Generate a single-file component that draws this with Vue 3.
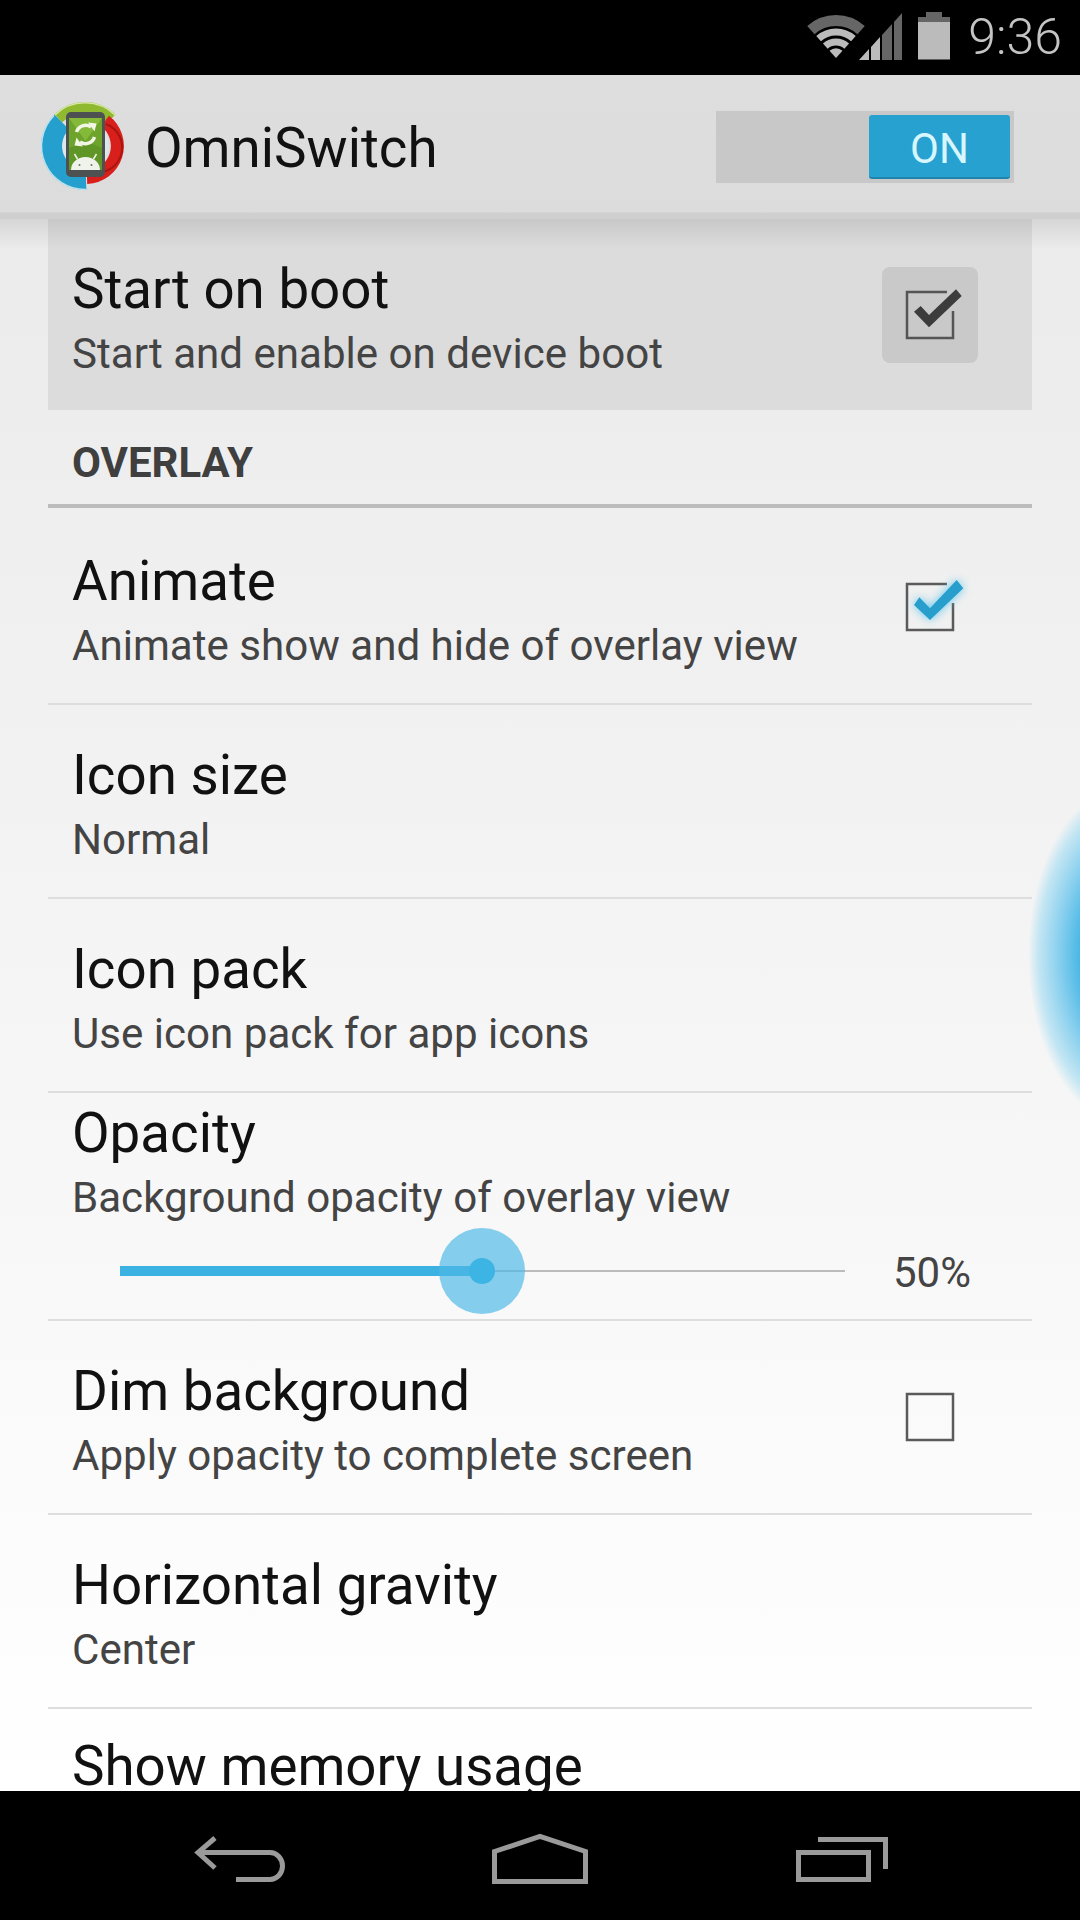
<script setup>
const plainRows = {
  iconSize: { title: 'Icon size', summary: 'Normal' },
  iconPack: { title: 'Icon pack', summary: 'Use icon pack for app icons' },
}
</script>

<template>
  <div class="screen">
    <header class="status-bar">
      <svg class="status-icons" width="160" height="75" viewBox="800 0 160 75">
        <!-- wifi fan -->
        <g fill="none">
          <path d="M811.9 30.1A37.5 37.5 0 0 1 862.1 30.1" stroke="#666" stroke-width="11" />
          <path d="M819.6 38.7A26 26 0 0 1 854.4 38.7" stroke="#bbb" stroke-width="7" />
          <path d="M826.3 46.1A16 16 0 0 1 847.7 46.1" stroke="#bbb" stroke-width="7" />
        </g>
        <path d="M837 58L830.5 50.8A9.5 9.5 0 0 1 843.5 50.8Z" fill="#bbb" />
        <!-- signal bars -->
        <path d="M860 60L870 49V60Z" fill="#bbb" />
        <path d="M872 47L881 37V60H872Z" fill="#bbb" />
        <path d="M883 35L893 24V60H883Z" fill="#666" />
        <path d="M895 22L903 13V60H895Z" fill="#666" />
        <!-- battery -->
        <path d="M927 12H943V17H951V22H919V17H927Z" fill="#666" />
        <rect x="919" y="22" width="32" height="37.500" fill="#bbb" />
      </svg>
      <span class="clock">9:36</span>
    </header>

    <div class="action-bar">
      <svg class="app-icon" width="90" height="90" viewBox="41 101 90 90">
        <circle cx="87" cy="146" r="24" fill="#dde6ea" />
        <!-- swirl: green crown, red right side, blue left side -->
        <path d="M60.200 118.300A38.500 38.500 0 0 1 113.800 118.300" fill="none" stroke="#8fb92f" stroke-width="11" />
        <path d="M56.400 115.400A43.500 43.500 0 0 1 117.600 115.400" fill="none" stroke="#d5e6a0" stroke-width="1.500" />
        <path d="M107 121A31.500 31.500 0 0 1 89 177.500" fill="none" stroke="#d81f1b" stroke-width="13" />
        <path d="M108 124A25 25 0 0 1 90 171" fill="none" stroke="#a8150f" stroke-width="2" />
        <path d="M63.700 122A33.500 33.500 0 0 0 88 179.500" fill="none" stroke="#259fcd" stroke-width="21" />
        <path d="M56 115.500A43.500 43.500 0 0 0 88 189.500" fill="none" stroke="#bfe3ee" stroke-width="1.500" />
        <!-- handset -->
        <rect x="68" y="112" width="39" height="65" rx="5" fill="#4d5152" />
        <rect x="71" y="118" width="33" height="52" fill="#6ea32c" />
        <path d="M71 118H104L87.500 141Z" fill="#85b93a" />
        <path d="M71 170V148L87.500 141L104 148V170Z" fill="#5f9626" />
        <g fill="none" stroke="#f1f6e6" stroke-width="3.500">
          <path d="M78.500 132A9.500 9.500 0 0 1 93 127" />
          <path d="M96.500 137A9.500 9.500 0 0 1 82 142" />
        </g>
        <path d="M90 122.500L98.500 123.500L96.500 131.500Z M85 146.500L76.500 145.500L78.500 137.500Z" fill="#f1f6e6" />
        <path d="M73 170A14.500 13 0 0 1 102 170Z" fill="#f0f2ec" />
        <path d="M79.500 159L76.500 154M95.500 159L98.500 154" stroke="#f0f2ec" stroke-width="1.500" />
        <circle cx="81.500" cy="165" r="1" fill="#6c7a5a" />
        <circle cx="93.500" cy="165" r="1" fill="#6c7a5a" />
      </svg>
      <span class="app-title">OmniSwitch</span>
      <div class="toggle">
        <span class="toggle-thumb">ON</span>
      </div>
    </div>

    <main class="prefs">
      <section class="row row-pressed">
        <div class="row-text">
          <div class="title">Start on boot</div>
          <div class="summary">Start and enable on device boot</div>
        </div>
        <div class="check-wrap check-wrap-pressed">
          <svg class="check" width="60" height="60" viewBox="0 0 60 60">
            <path d="M47 7H7V53H53V26" fill="none" stroke="#555" stroke-width="2.500" />
            <path d="M29 42.300L61.700 11L56 4.300L29 30L20.700 21L14 26.700Z" fill="#3c3c3c" />
          </svg>
        </div>
      </section>

      <h2 class="group">OVERLAY</h2>

      <section class="row">
        <div class="row-text">
          <div class="title">Animate</div>
          <div class="summary">Animate show and hide of overlay view</div>
        </div>
        <div class="check-wrap">
          <svg class="check check-on" width="60" height="60" viewBox="0 0 60 60">
            <path d="M47 7H7V53H53V26" fill="none" stroke="#5a5a5a" stroke-width="2.500" />
            <path class="check-mark" d="M30 43L63.300 11.300L56.700 3L30 31.300L19.300 20.300L14 28Z" fill="#279ecb" />
          </svg>
        </div>
      </section>

      <section class="row">
        <div class="row-text">
          <div class="title">{{ plainRows.iconSize.title }}</div>
          <div class="summary">{{ plainRows.iconSize.summary }}</div>
        </div>
      </section>

      <section class="row">
        <div class="row-text">
          <div class="title">{{ plainRows.iconPack.title }}</div>
          <div class="summary">{{ plainRows.iconPack.summary }}</div>
        </div>
      </section>

      <section class="row row-slider">
        <div class="row-text row-text-tight">
          <div class="title">Opacity</div>
          <div class="summary">Background opacity of overlay view</div>
        </div>
        <div class="slider">
          <div class="slider-track">
            <div class="slider-fill"></div>
            <div class="slider-thumb"><span class="slider-dot"></span></div>
          </div>
          <span class="slider-value">50%</span>
        </div>
      </section>

      <section class="row">
        <div class="row-text">
          <div class="title">Dim background</div>
          <div class="summary">Apply opacity to complete screen</div>
        </div>
        <div class="check-wrap">
          <svg width="60" height="60" viewBox="0 0 60 60">
            <rect x="7" y="7" width="46" height="46" fill="none" stroke="#5a5a5a" stroke-width="2.500" />
          </svg>
        </div>
      </section>

      <section class="row">
        <div class="row-text">
          <div class="title">Horizontal gravity</div>
          <div class="summary">Center</div>
        </div>
      </section>

      <section class="row row-last">
        <div class="row-text row-text-last">
          <div class="title">Show memory usage</div>
        </div>
      </section>

      <!-- edge handle of the switcher, peeking in from the right -->
      <div class="edge-glow"></div>
    </main>

    <nav class="nav-bar">
      <svg class="nav-back" width="100" height="60" viewBox="190 1830 100 60">
        <path d="M215 1838L198 1852.500L215 1868" fill="none" stroke="#9a9a9a" stroke-width="5" />
        <path d="M198 1852.500H270A12.500 13.500 0 0 1 270 1879.500H236" fill="none" stroke="#9a9a9a" stroke-width="5" />
      </svg>
      <svg class="nav-home" width="100" height="60" viewBox="493 1828 100 60">
        <path d="M496.500 1849.500L542 1834.500L587.500 1849.500V1879.500H496.500Z" fill="none" stroke="#9a9a9a" stroke-width="5" />
      </svg>
      <svg class="nav-recent" width="100" height="60" viewBox="796 1830 100 60">
        <rect x="802.500" y="1852.500" width="70" height="27" fill="none" stroke="#9a9a9a" stroke-width="5" />
        <path d="M822 1839.500H889.500V1869" fill="none" stroke="#9a9a9a" stroke-width="5" />
      </svg>
    </nav>
  </div>
</template>

<style scoped>
.screen {
  width: 1080px;
  height: 1920px;
  display: flex;
  flex-direction: column;
  overflow: hidden;
  font-family: Roboto, "Liberation Sans", sans-serif;
  background: #000;
}

.status-bar {
  height: 75px;
  flex: none;
  background: #000;
  display: flex;
  justify-content: flex-end;
  align-items: center;
  padding-right: 18px;
}

.status-icons {
  margin-right: 9px;
}

.clock {
  font-size: 50px;
  font-weight: 300;
  color: #c4c4c4;
  line-height: 75px;
}

.action-bar {
  position: relative;
  z-index: 2;
  height: 144px;
  flex: none;
  box-sizing: border-box;
  background: linear-gradient(#dedede, #dcdcdc 95%, #cfcfcf 96%, #cfcfcf);
  display: flex;
  align-items: center;
  padding: 0 66px 0 39px;
}

.action-bar::after {
  content: "";
  position: absolute;
  left: 0;
  right: 0;
  top: 100%;
  height: 30px;
  background: linear-gradient(rgba(0, 0, 0, 0.09), rgba(0, 0, 0, 0));
}

.app-icon {
  flex: none;
  margin-top: -2px;
}

.app-title {
  margin-left: 16px;
  padding-top: 2px;
  font-size: 54.7px;
  color: #111;
  flex: 1;
}

.toggle {
  width: 298px;
  height: 72px;
  box-sizing: border-box;
  padding: 4px;
  background: #c8c8c8;
  display: flex;
  justify-content: flex-end;
  margin-top: -1px;
}

.toggle-thumb {
  width: 141px;
  height: 64px;
  border-radius: 3px;
  box-sizing: border-box;
  background: #27a2d0;
  border-bottom: 2px solid #1f84ad;
  color: #d8f6ff;
  font-size: 42px;
  line-height: 68px;
  text-align: center;
}

.prefs {
  position: relative;
  flex: 1;
  min-height: 0;
  overflow: hidden;
  background: linear-gradient(#ebebeb, #ffffff);
}

.row {
  height: 194px;
  box-sizing: border-box;
  margin: 0 48px;
  border-bottom: 2px solid #dedede;
  display: flex;
}

.row-pressed {
  height: 191px;
  background: #dcdcdc;
  border-bottom: 0;
}

.row-slider {
  height: 228px;
  flex-direction: column;
}

.row-last {
  border-bottom: 0;
}

.row-text {
  flex: 1;
  padding: 38px 0 0 24px;
}

.row-text-tight {
  flex: none;
  padding-top: 8px;
}

.row-text-last {
  padding-top: 25px;
}

.title {
  font-size: 54.7px;
  line-height: 64px;
  color: #111;
  white-space: nowrap;
}

.summary {
  font-size: 42.1px;
  line-height: 66px;
  color: #444;
  white-space: nowrap;
}

.group {
  margin: 0 48px 3px;
  height: 98px;
  box-sizing: border-box;
  padding: 30px 0 0 24px;
  border-bottom: 4px solid #bcbcbc;
  font-size: 42px;
  line-height: 46px;
  font-weight: 700;
  color: #3f3f3f;
}

.check-wrap {
  flex: none;
  align-self: center;
  width: 96px;
  height: 96px;
  margin-right: 54px;
  border-radius: 8px;
  display: flex;
  align-items: center;
  justify-content: center;
}

.check-wrap-pressed {
  background: #c9c9c9;
}

.check {
  overflow: visible;
}

.check-mark {
  filter: drop-shadow(0 0 5px #5cc6ee);
}

.slider {
  display: flex;
  align-items: center;
  height: 84px;
  margin-top: -2px;
  padding-left: 72px;
}

.slider-track {
  position: relative;
  width: 725px;
  height: 2px;
  background: #bcbcbc;
}

.slider-fill {
  position: absolute;
  left: 0;
  top: -4px;
  width: 362px;
  height: 10px;
  background: #3cb2e2;
}

.slider-thumb {
  position: absolute;
  left: 319px;
  top: -42px;
  width: 86px;
  height: 86px;
  border-radius: 50%;
  background: rgba(77, 184, 230, 0.68);
  display: flex;
  align-items: center;
  justify-content: center;
}

.slider-dot {
  width: 26px;
  height: 26px;
  border-radius: 50%;
  background: #3cb4e4;
}

.slider-value {
  margin-left: 48px;
  padding-top: 2px;
  font-size: 42px;
  color: #444;
}

.edge-glow {
  position: absolute;
  right: -152px;
  top: 565px;
  width: 204px;
  height: 342px;
  border-radius: 50%;
  background: radial-gradient(closest-side, #3fb3e6 0, #4cb8e6 50%, #8fd2ef 72%, #c4e6f3 90%, rgba(225, 242, 248, 0) 100%);
}

.nav-bar {
  height: 129px;
  flex: none;
  background: #000;
  position: relative;
  display: flex;
  align-items: flex-start;
  box-sizing: border-box;
  padding: 39px 188px 0 190px;
  justify-content: space-between;
}
</style>
